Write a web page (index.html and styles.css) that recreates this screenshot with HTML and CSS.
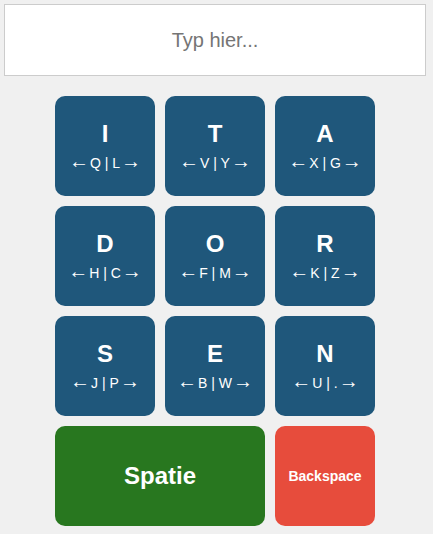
FILE: index.html
```html
<!DOCTYPE html>
<html>
<head>
<meta charset="utf-8">
<link rel="stylesheet" href="styles.css">
</head>
<body>
<div class="app">
  <input class="output" type="text" placeholder="Typ hier...">
  <div class="keys">
    <button class="key"><span class="main">I</span><span class="sub"><span class="arr">←</span>Q | L<span class="arr">→</span></span></button>
    <button class="key"><span class="main">T</span><span class="sub"><span class="arr">←</span>V | Y<span class="arr">→</span></span></button>
    <button class="key"><span class="main">A</span><span class="sub"><span class="arr">←</span>X | G<span class="arr">→</span></span></button>
    <button class="key"><span class="main">D</span><span class="sub"><span class="arr">←</span>H | C<span class="arr">→</span></span></button>
    <button class="key"><span class="main">O</span><span class="sub"><span class="arr">←</span>F | M<span class="arr">→</span></span></button>
    <button class="key"><span class="main">R</span><span class="sub"><span class="arr">←</span>K | Z<span class="arr">→</span></span></button>
    <button class="key"><span class="main">S</span><span class="sub"><span class="arr">←</span>J | P<span class="arr">→</span></span></button>
    <button class="key"><span class="main">E</span><span class="sub"><span class="arr">←</span>B | W<span class="arr">→</span></span></button>
    <button class="key"><span class="main">N</span><span class="sub"><span class="arr">←</span>U | .<span class="arr">→</span></span></button>
    <button class="key space">Spatie</button>
    <button class="key back">Backspace</button>
  </div>
</div>
</body>
</html>
```
FILE: styles.css
```css
html, body {
  margin: 0;
  padding: 0;
  background: #f0f0f0;
  font-family: "Liberation Sans", Arial, sans-serif;
}
.app {
  width: 430px;
  padding: 4px;
  box-sizing: border-box;
  display: flex;
  flex-direction: column;
  align-items: center;
  gap: 20px;
}
.output {
  width: 422px;
  height: 72px;
  box-sizing: border-box;
  border: 1px solid #cccccc;
  background: #ffffff;
  font-family: "Liberation Sans", Arial, sans-serif;
  font-size: 20px;
  text-align: center;
  outline: none;
  margin: 0;
  padding: 0;
}
.output::placeholder {
  color: #757575;
}
.keys {
  display: grid;
  grid-template-columns: repeat(3, 100px);
  grid-auto-rows: 100px;
  gap: 10px;
}
.key {
  border: none;
  border-radius: 10px;
  background: #1f577b;
  color: #ffffff;
  display: flex;
  flex-direction: column;
  align-items: center;
  justify-content: center;
  padding: 0;
  margin: 0;
  font-family: "Liberation Sans", Arial, sans-serif;
}
.main {
  font-size: 24px;
  font-weight: bold;
  line-height: 28px;
}
.sub {
  font-size: 14px;
  line-height: 18px;
  margin-top: 4px;
  white-space: nowrap;
}
.arr {
  font-family: "Liberation Sans", Arial, sans-serif;
  font-size: 20px;
  line-height: 18px;
  margin: 0 1px;
}
.space {
  grid-column: span 2;
  background: #28771f;
  font-size: 24px;
  font-weight: bold;
}
.back {
  background: #e74c3c;
  font-size: 14px;
  font-weight: bold;
}
```
